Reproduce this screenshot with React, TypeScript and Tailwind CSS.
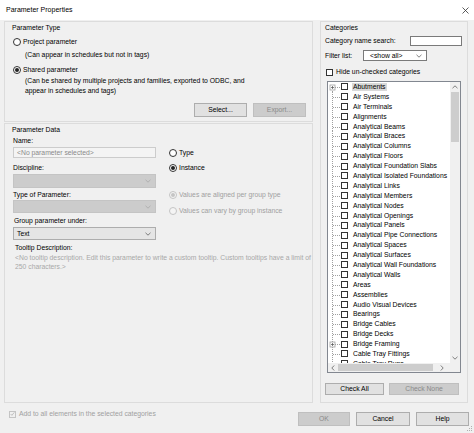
import React from "react";

function Radio({ checked = false, disabled = false }: { checked?: boolean; disabled?: boolean }) {
  return (
    <span
      className={
        disabled
          ? "w-[8px] h-[8px] rounded-full border border-[#c4c4c4] bg-[#f4f4f4] flex items-center justify-center shrink-0"
          : "w-[8px] h-[8px] rounded-full border border-[#333333] bg-white flex items-center justify-center shrink-0"
      }
    >
      {checked && (
        <span className={disabled ? "w-[4px] h-[4px] rounded-full bg-[#c4c4c4]" : "w-[4px] h-[4px] rounded-full bg-[#222222]"} />
      )}
    </span>
  );
}

function Check({ checked = false, disabled = false }: { checked?: boolean; disabled?: boolean }) {
  return (
    <span
      className={
        disabled
          ? "w-[7px] h-[7px] border border-[#c4c4c4] bg-[#f0f0f0] flex items-center justify-center shrink-0"
          : "w-[7px] h-[7px] border border-[#333333] bg-white flex items-center justify-center shrink-0"
      }
    >
      {checked && (
        <svg width="6" height="6" viewBox="0 0 6 6">
          <polyline points="0.8,3 2.3,4.6 5.2,1" fill="none" stroke="#b0b0b0" strokeWidth="0.9" />
        </svg>
      )}
    </span>
  );
}

function Chevron({ color = "#606060" }: { color?: string }) {
  return (
    <svg width="6" height="4" viewBox="0 0 6 4">
      <polyline points="0.5,0.8 3,3.2 5.5,0.8" fill="none" stroke={color} strokeWidth="0.8" />
    </svg>
  );
}

function Btn({ label, w, h, disabled = false }: { label: string; w: string; h: string; disabled?: boolean }) {
  return (
    <div
      className={
        (disabled
          ? "bg-[#cccccc] border-[#bfbfbf] text-[#8a8a8a] "
          : "bg-[#e1e1e1] border-[#adadad] text-black ") +
        w +
        " " +
        h +
        " border flex items-center justify-center"
      }
    >
      {label}
    </div>
  );
}

const cats: { n: string; plus?: boolean; sel?: boolean }[] = [
  { n: "Abutments", plus: true, sel: true },
  { n: "Air Systems" },
  { n: "Air Terminals" },
  { n: "Alignments" },
  { n: "Analytical Beams" },
  { n: "Analytical Braces" },
  { n: "Analytical Columns" },
  { n: "Analytical Floors" },
  { n: "Analytical Foundation Slabs" },
  { n: "Analytical Isolated Foundations" },
  { n: "Analytical Links" },
  { n: "Analytical Members" },
  { n: "Analytical Nodes" },
  { n: "Analytical Openings" },
  { n: "Analytical Panels" },
  { n: "Analytical Pipe Connections" },
  { n: "Analytical Spaces" },
  { n: "Analytical Surfaces" },
  { n: "Analytical Wall Foundations" },
  { n: "Analytical Walls" },
  { n: "Areas" },
  { n: "Assemblies" },
  { n: "Audio Visual Devices" },
  { n: "Bearings" },
  { n: "Bridge Cables" },
  { n: "Bridge Decks" },
  { n: "Bridge Framing", plus: true },
  { n: "Cable Tray Fittings" },
  { n: "Cable Tray Runs" },
];

function TreeRow({ n, plus, sel, first }: { n: string; plus?: boolean; sel?: boolean; first?: boolean }) {
  return (
    <div className="h-[9.9px] flex items-center shrink-0 whitespace-nowrap">
      <svg width="13" height="10" viewBox="0 0 13 10" className="shrink-0">
        <line x1="4.5" y1={first ? 5 : 0} x2="4.5" y2="10" stroke="#a0a0a0" strokeWidth="1" strokeDasharray="1 1" />
        <line x1="5" y1="5.5" x2="12" y2="5.5" stroke="#a0a0a0" strokeWidth="1" strokeDasharray="1 1" />
        {plus && (
          <g>
            <rect x="2" y="3" width="5" height="5" fill="white" stroke="#a0a0a0" strokeWidth="0.8" />
            <line x1="3" y1="5.5" x2="6" y2="5.5" stroke="#505050" strokeWidth="0.7" />
            <line x1="4.5" y1="4" x2="4.5" y2="7" stroke="#505050" strokeWidth="0.7" />
          </g>
        )}
      </svg>
      <span className="w-[7px] h-[7px] border border-[#333333] bg-white shrink-0" />
      <span className={sel ? "ml-[4px] px-[1px] bg-[#d9d9d9] leading-[8px]" : "ml-[4px] px-[1px] leading-[8px]"}>{n}</span>
    </div>
  );
}

export default function App() {
  return (
    <div className="w-[474px] h-[433px] bg-[#f0f0f0] flex flex-col overflow-hidden text-[6.8px] leading-[8px] text-black [font-family:'Liberation_Sans',Arial,sans-serif] relative">
      {/* Title bar */}
      <div className="h-[20px] bg-white flex items-center justify-between pl-[6px] pr-[5px] shrink-0">
        <span className="text-[7px]">Parameter Properties</span>
        <svg width="7" height="7" viewBox="0 0 7 7">
          <line x1="0.5" y1="0.5" x2="6.5" y2="6.5" stroke="#333" strokeWidth="0.8" />
          <line x1="6.5" y1="0.5" x2="0.5" y2="6.5" stroke="#333" strokeWidth="0.8" />
        </svg>
      </div>

      {/* Main */}
      <div className="flex flex-row pl-[4px] h-[383px] shrink-0">
        <div className="w-[309px] flex flex-col">
          {/* Parameter Type */}
          <div className="mt-[1px] h-[101px] border border-[#dcdcdc] flex flex-col shrink-0">
            <div className="h-[12px] flex items-center pl-[7px]">Parameter Type</div>
            <div className="mt-[2px] h-[12px] flex items-center pl-[8px] gap-[2px]">
              <Radio />
              <span>Project parameter</span>
            </div>
            <div className="mt-[1px] h-[12px] flex items-center pl-[20px]">(Can appear in schedules but not in tags)</div>
            <div className="mt-[3px] h-[12px] flex items-center pl-[8px] gap-[2px]">
              <Radio checked />
              <span>Shared parameter</span>
            </div>
            <div className="pl-[20px] leading-[10px] whitespace-nowrap">
              (Can be shared by multiple projects and families, exported to ODBC, and
              <br />
              appear in schedules and tags)
            </div>
            <div className="mt-[7px] flex justify-end gap-[6px] pr-[6px]">
              <Btn label="Select..." w="w-[53px]" h="h-[14px]" />
              <Btn label="Export..." w="w-[53px]" h="h-[14px]" disabled />
            </div>
          </div>

          {/* Parameter Data */}
          <div className="mt-[1px] h-[280px] border border-[#dcdcdc] flex flex-col shrink-0">
            <div className="h-[12px] flex items-center pl-[7px]">Parameter Data</div>
            <div className="flex flex-row">
              <div className="flex flex-col pl-[8px] w-[151px]">
                <div className="h-[10px] flex items-center">Name:</div>
                <div className="mt-[1px] h-[11px] w-[143px] border border-[#cccccc] bg-[#f4f4f4] flex items-center pl-[3px] text-[#8a8a8a]">
                  &lt;No parameter selected&gt;
                </div>
                <div className="mt-[5px] h-[10px] flex items-center">Discipline:</div>
                <div className="mt-[1px] h-[14px] w-[143px] border border-[#c4c4c4] bg-[#cccccc] flex items-center justify-end pr-[4px]">
                  <Chevron color="#a8a8a8" />
                </div>
                <div className="mt-[2px] h-[10px] flex items-center">Type of Parameter:</div>
                <div className="h-[13px] w-[143px] border border-[#c4c4c4] bg-[#cccccc] flex items-center justify-end pr-[4px]">
                  <Chevron color="#a8a8a8" />
                </div>
                <div className="mt-[3px] h-[10px] flex items-center pl-[1px]">Group parameter under:</div>
                <div className="mt-[1px] h-[13px] w-[143px] border border-[#adadad] bg-[#e5e5e5] flex items-center justify-between pl-[3px] pr-[4px]">
                  <span>Text</span>
                  <Chevron />
                </div>
              </div>
              <div className="flex flex-col ml-[13px]">
                <div className="mt-[11px] h-[12px] flex items-center gap-[2px]">
                  <Radio />
                  <span>Type</span>
                </div>
                <div className="mt-[3px] h-[12px] flex items-center gap-[2px]">
                  <Radio checked />
                  <span>Instance</span>
                </div>
                <div className="mt-[15px] h-[12px] flex items-center gap-[2px] text-[#a0a0a0]">
                  <Radio checked disabled />
                  <span>Values are aligned per group type</span>
                </div>
                <div className="mt-[4px] h-[12px] flex items-center gap-[2px] text-[#a0a0a0]">
                  <Radio disabled />
                  <span>Values can vary by group instance</span>
                </div>
              </div>
            </div>
            <div className="mt-[3px] h-[10px] flex items-center pl-[10px]">Tooltip Description:</div>
            <div className="mt-[1px] pl-[10px] leading-[8.5px] text-[#a8a8a8] whitespace-nowrap">
              &lt;No tooltip description. Edit this parameter to write a custom tooltip. Custom tooltips have a limit of
              <br />
              250 characters.&gt;
            </div>
          </div>
        </div>

        {/* Categories */}
        <div className="ml-[7px] mt-[1px] w-[148px] h-[382px] border border-[#dcdcdc] flex flex-col shrink-0">
          <div className="h-[12px] flex items-center pl-[4px]">Categories</div>
          <div className="mt-[1px] h-[12px] flex items-center pl-[4px]">
            <span>Category name search:</span>
            <div className="ml-auto mr-[5px] w-[52px] h-[10px] bg-white border border-[#7a7a7a]" />
          </div>
          <div className="mt-[3px] h-[11px] flex items-center pl-[4px]">
            <span className="w-[38px]">Filter list:</span>
            <div className="w-[64px] h-[11px] bg-white border border-[#7a7a7a] flex items-center justify-between pl-[6px] pr-[4px]">
              <span>&lt;show all&gt;</span>
              <Chevron />
            </div>
          </div>
          <div className="mt-[5px] h-[12px] flex items-center pl-[5px] gap-[3px]">
            <Check />
            <span>Hide un-checked categories</span>
          </div>
          <div className="mt-[3px] ml-[6px] w-[134px] h-[292px] border border-[#828790] bg-white flex flex-col">
            <div className="flex flex-row h-[281px]">
              <div className="flex-1 flex flex-col overflow-hidden pt-[0px]">
                {cats.map((c, i) => (
                  <TreeRow key={c.n} n={c.n} plus={c.plus} sel={c.sel} first={i === 0} />
                ))}
              </div>
              <div className="w-[10px] bg-[#f0f0f0] flex flex-col items-center">
                <div className="h-[10px] flex items-center justify-center">
                  <svg width="6" height="4" viewBox="0 0 6 4">
                    <polyline points="0.5,3.2 3,0.8 5.5,3.2" fill="none" stroke="#606060" strokeWidth="0.8" />
                  </svg>
                </div>
                <div className="w-[8px] h-[50px] bg-[#cdcdcd]" />
                <div className="mt-auto h-[10px] flex items-center justify-center">
                  <Chevron />
                </div>
              </div>
            </div>
            <div className="h-[9px] flex flex-row bg-[#f0f0f0] items-center">
              <div className="w-[10px] flex justify-center">
                <svg width="4" height="6" viewBox="0 0 4 6">
                  <polyline points="3.2,0.5 0.8,3 3.2,5.5" fill="none" stroke="#606060" strokeWidth="0.8" />
                </svg>
              </div>
              <div className="w-[95px] h-[7px] bg-[#cdcdcd]" />
              <div className="flex-1 flex justify-center">
                <svg width="4" height="6" viewBox="0 0 4 6">
                  <polyline points="0.8,0.5 3.2,3 0.8,5.5" fill="none" stroke="#606060" strokeWidth="0.8" />
                </svg>
              </div>
              <div className="w-[10px] h-[9px] bg-[#f0f0f0]" />
            </div>
          </div>
          <div className="mt-[10px] pl-[4px] flex gap-[5px]">
            <Btn label="Check All" w="w-[59px]" h="h-[12px]" />
            <Btn label="Check None" w="w-[70px]" h="h-[12px]" disabled />
          </div>
        </div>
      </div>

      {/* Bottom row */}
      <div className="h-[30px] flex flex-row items-start shrink-0">
        <div className="mt-[7px] ml-[9px] flex items-center gap-[3px] text-[#a0a0a0]">
          <Check checked disabled />
          <span>Add to all elements in the selected categories</span>
        </div>
        <div className="ml-auto mt-[9px] mr-[5px] flex gap-[6px]">
          <Btn label="OK" w="w-[52px]" h="h-[14px]" disabled />
          <Btn label="Cancel" w="w-[54px]" h="h-[14px]" />
          <Btn label="Help" w="w-[53px]" h="h-[14px]" />
        </div>
      </div>
      <svg width="6" height="6" viewBox="0 0 6 6" className="absolute right-[1px] bottom-[1px]">
        <rect x="4" y="0" width="1" height="1" fill="#b0b0b0" />
        <rect x="2" y="2" width="1" height="1" fill="#b0b0b0" />
        <rect x="4" y="2" width="1" height="1" fill="#b0b0b0" />
        <rect x="0" y="4" width="1" height="1" fill="#b0b0b0" />
        <rect x="2" y="4" width="1" height="1" fill="#b0b0b0" />
        <rect x="4" y="4" width="1" height="1" fill="#b0b0b0" />
      </svg>
    </div>
  );
}
